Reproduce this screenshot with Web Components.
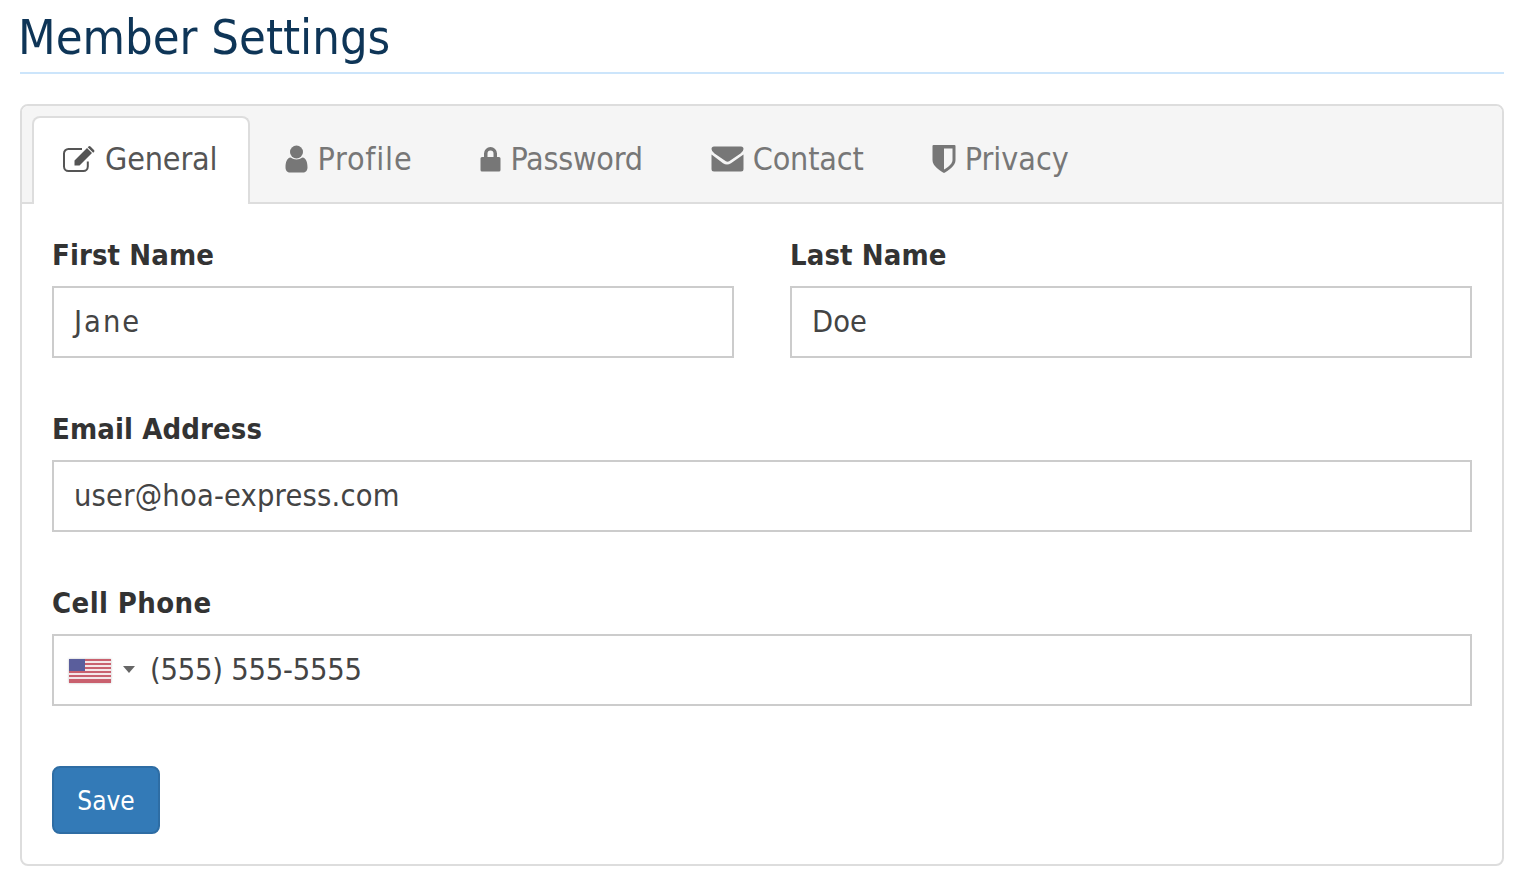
<!DOCTYPE html>
<html lang="en">
<head>
<meta charset="utf-8">
<title>Member Settings</title>
<style>
  html, body { margin: 0; background: #fff; }
  body { font-family: "DejaVu Sans Condensed", "DejaVu Sans", sans-serif; font-stretch: condensed; color: #333; overflow: hidden; }
</style>
</head>
<body>
<member-settings>
  <page-title>Member Settings</page-title>
  <settings-panel>
    <tab-item slot="tabs" icon="edit" active style="letter-spacing:-.15px">General</tab-item>
    <tab-item slot="tabs" icon="user" style="letter-spacing:.8px">Profile</tab-item>
    <tab-item slot="tabs" icon="lock" style="letter-spacing:-.25px">Password</tab-item>
    <tab-item slot="tabs" icon="envelope" style="letter-spacing:-.15px">Contact</tab-item>
    <tab-item slot="tabs" icon="shield">Privacy</tab-item>
    <div class="row" style="display:grid;grid-template-columns:1fr 1fr;gap:56px">
      <form-field label="First Name" value="Jane" tracking="2px"></form-field>
      <form-field label="Last Name" value="Doe"></form-field>
    </div>
    <form-field label="Email Address" value="user@hoa-express.com" tracking=".2px"></form-field>
    <form-field label="Cell Phone" value="(555) 555-5555" tracking="-.2px" label-tracking=".4px" phone></form-field>
    <save-button>Save</save-button>
  </settings-panel>
</member-settings>

<script>
const ICONS = {
  edit: '<svg class="edit" width="33" height="28" viewBox="0 0 33 28"><path d="M24.800 16.500V21.500a4.500 4.500 0 0 1-4.500 4.500H5.500A4.500 4.500 0 0 1 1 21.500V8.500A4.500 4.500 0 0 1 5.500 4H19" fill="none" stroke="currentColor" stroke-width="2"/><path d="M11.500 15.500 24 3l5 5-12.500 12.500h-5zM25.500 1.500q1-1 2 0l3.500 3.500q1 1 0 2l-.8.800-5.500-5.500z" fill="currentColor"/></svg>',
  user: '<svg width="23" height="28" viewBox="0 0 23 28"><circle cx="11.500" cy="7" r="6.500" fill="currentColor"/><path d="M5.500 12.500q6 4 12 0c3.500.5 5 4.500 5 10 0 3-2 5-4.500 5H5c-2.500 0-4.500-2-4.500-5 0-5.500 1.500-9.500 5-10z" fill="currentColor"/></svg>',
  lock: '<svg width="21" height="26" viewBox="0 0 21 26"><path d="M4 11V7.500a6.500 6.500 0 0 1 13 0V11h2q1.500 0 1.500 1.500v11.500q0 1.500-1.500 1.500H2q-1.500 0-1.500-1.500V12.500Q.5 11 2 11zm3.500 0h6V7.500a3 3 0 0 0-6 0z" fill="currentColor" fill-rule="evenodd"/></svg>',
  envelope: '<svg width="33" height="26" viewBox="0 0 33 26"><path d="M.5 3Q.5.500 3 .500h27q2.500 0 2.500 2.500 0 2.500-3 4.500l-11 7.500q-2 1.300-4 0l-11-7.500Q.5 5.500.5 3z" fill="currentColor"/><path d="M.5 8.500v14.500q0 2.500 2.500 2.500h27q2.500 0 2.500-2.500V8.500l-12.500 8.800q-4 2.500-8 0z" fill="currentColor"/></svg>',
  shield: '<svg width="24" height="28" viewBox="0 0 24 28"><path d="M1.500 0h21q1 0 1 1v14c0 6-7 10.500-11.500 13C7.500 25.500.5 21 .5 15V1q0-1 1-1z" fill="currentColor"/><path d="M12 3.500h8.500V15c0 4-5 7.500-8.500 9.500z" fill="#f5f5f5"/></svg>'
};

class MemberSettings extends HTMLElement {
  constructor() {
    super();
    this.attachShadow({ mode: "open" });
    this.shadowRoot.innerHTML = `
      <style>
        :host { display: block; padding: 0 24px 0 20px; }
      </style>
      <slot></slot>`;
  }
}

class PageTitle extends HTMLElement {
  constructor() {
    super();
    this.attachShadow({ mode: "open" });
    this.shadowRoot.innerHTML = `
      <style>
        :host { display: block; height: 72px; border-bottom: 2px solid #cce5fb; margin-bottom: 30px;
          font-size: 48.5px; line-height: 74px; text-indent: -2px; color: #0e3557; white-space: nowrap; }
      </style>
      <slot></slot>`;
  }
}

class SettingsPanel extends HTMLElement {
  constructor() {
    super();
    this.attachShadow({ mode: "open" });
    this.shadowRoot.innerHTML = `
      <style>
        :host { display: block; border: 2px solid #ddd; border-radius: 8px; box-sizing: border-box; height: 762px; overflow: hidden; }
        .tabs { display: flex; height: 98px; box-sizing: border-box; padding: 10px 0 0 10px;
          background: #f5f5f5; border-bottom: 2px solid #ddd; }
        .body { padding: 34px 30px 30px; }
      </style>
      <div class="tabs"><slot name="tabs"></slot></div>
      <div class="body"><slot></slot></div>`;
  }
}

class TabItem extends HTMLElement {
  constructor() {
    super();
    this.attachShadow({ mode: "open" });
    const icon = ICONS[this.getAttribute("icon")];
    this.shadowRoot.innerHTML = `
      <style>
        :host { display: flex; align-items: center; gap: 9px; height: 88px; box-sizing: border-box; padding: 0 31px 4px 33px;
          border: 2px solid transparent; border-bottom: 0; border-radius: 8px 8px 0 0;
          font-size: 32px; color: #777; white-space: nowrap; }
        :host([active]) { background: #fff; border-color: #ddd; color: #555; }
        svg { display: block; }
        .edit { margin-left: -4px; }
      </style>
      ${icon}<span><slot></slot></span>`;
  }
}

class FormField extends HTMLElement {
  constructor() {
    super();
    this.attachShadow({ mode: "open" });
    const phone = this.hasAttribute("phone");
    const tracking = this.getAttribute("tracking") || "0";
    const labelTracking = this.getAttribute("label-tracking") || ".1px";
    const flag = phone ? `
      <svg class="flag" width="42" height="24" viewBox="0 0 42 24">
        <rect width="42" height="24" fill="#f4e6e8"/>
        <path d="M0 1h42M0 5h42M0 9h42M0 13h42M0 17h42M0 21h42" stroke="#c9606e" stroke-width="2"/>
        <rect y="22" width="42" height="2" fill="#c9606e"/>
        <rect width="16" height="12" fill="#5a5e9c"/>
      </svg>
      <span class="caret"></span>` : "";
    this.shadowRoot.innerHTML = `
      <style>
        :host { display: block; margin-bottom: 54px; }
        label { display: block; font-weight: 700; font-size: 29px; line-height: 34px; margin-bottom: 14px; color: #333;
          letter-spacing: ${labelTracking}; }
        .box { display: flex; align-items: center; height: 72px; box-sizing: border-box; border: 2px solid #ccc;
          padding: 0 20px 2px; font-size: 30.5px; color: #444; background: #fff; letter-spacing: ${tracking}; }
        :host([phone]) { margin-bottom: 60px; }
        :host([phone]) .box { padding-left: 15px; }
        .flag { margin: 3px 12px 0 0; filter: drop-shadow(0 0 1px rgba(0,0,0,.25)); }
        .caret { width: 0; height: 0; border: 6px solid transparent; border-top: 7px solid #666; border-bottom: 0; margin-right: 15px; }
      </style>
      <label>${this.getAttribute("label")}</label>
      <div class="box">${flag}<span>${this.getAttribute("value")}</span></div>`;
  }
}

class SaveButton extends HTMLElement {
  constructor() {
    super();
    this.attachShadow({ mode: "open" });
    this.shadowRoot.innerHTML = `
      <style>
        :host { display: inline-flex; align-items: center; justify-content: center; width: 108px; height: 68px; box-sizing: border-box;
          background: #337ab7; border: 2px solid #2e6da4; border-radius: 8px; color: #fff; font-size: 26px; padding-top: 1px; }
      </style>
      <slot></slot>`;
  }
}

customElements.define("member-settings", MemberSettings);
customElements.define("page-title", PageTitle);
customElements.define("settings-panel", SettingsPanel);
customElements.define("tab-item", TabItem);
customElements.define("form-field", FormField);
customElements.define("save-button", SaveButton);
</script>
</body>
</html>
